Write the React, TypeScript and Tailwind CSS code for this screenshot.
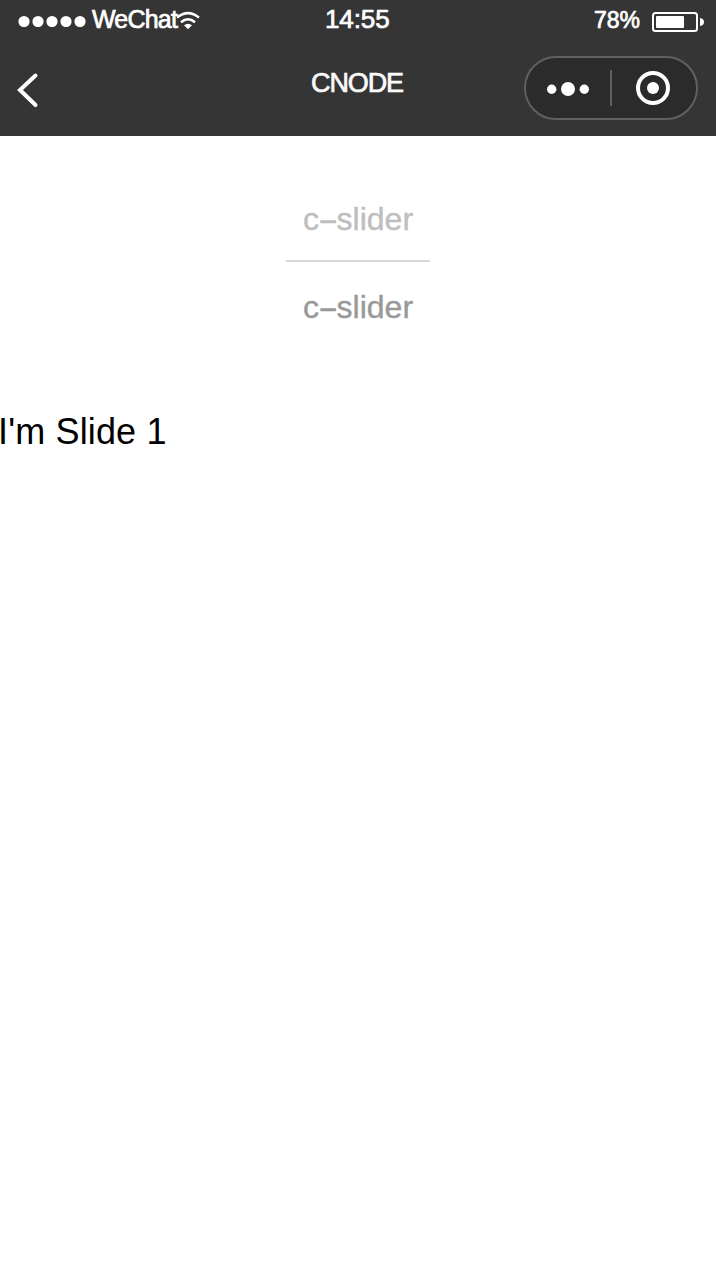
function StatusBar() {
  return (
    <div className="relative flex h-10 items-start text-white">
      <svg className="ml-[18px] mt-[15px] h-3 w-[68px] shrink-0" viewBox="0 0 68 12" fill="currentColor">
        <circle cx="6" cy="6.5" r="5.6" />
        <circle cx="20" cy="6.5" r="5.6" />
        <circle cx="34" cy="6.5" r="5.6" />
        <circle cx="48" cy="6.5" r="5.6" />
        <circle cx="62" cy="6.5" r="5.6" />
      </svg>
      <span className="ml-[6px] mt-1 w-[85px] whitespace-nowrap text-[25px] leading-[30px] tracking-[-0.8px] [-webkit-text-stroke:0.7px_white]">
        WeChat
      </span>
      <svg className="-ml-px mt-[11px] h-[19px] w-6 shrink-0" viewBox="0 0 24 19" fill="none" stroke="currentColor" strokeWidth="2.5">
        <path d="M1 6.6Q12 -2.4 23 6.6" />
        <path d="M5 11.2Q12 5.2 19 11.2" />
        <path d="M12 18.2L8 14.3Q12 11.2 16 14.3Z" fill="currentColor" stroke="none" />
      </svg>
      <span className="absolute left-[325px] top-1 text-[26px] leading-[30px] tracking-[-0.1px] [-webkit-text-stroke:0.7px_white]">14:55</span>
      <span className="ml-auto mr-3 mt-[5px] text-[23px] leading-[30px] [-webkit-text-stroke:0.7px_white]">78%</span>
      <svg className="mr-3 mt-3 h-5 w-[52px] shrink-0" viewBox="0 0 52 20" fill="none">
        <rect x="1" y="1" width="44" height="18" rx="2.5" stroke="currentColor" strokeWidth="2" />
        <rect x="4" y="4" width="28" height="12" rx="1" fill="currentColor" />
        <path d="M48 6Q52 6.5 52 10T48 14Z" fill="currentColor" />
      </svg>
    </div>
  );
}

function Capsule() {
  return (
    <div className="mr-[18px] mt-4 flex h-16 w-[174px] items-center rounded-full border-2 border-[#606060] bg-[#2b2b2b] text-white">
      <svg className="ml-5 h-4 w-11" viewBox="0 0 44 16" fill="currentColor">
        <circle cx="5.7" cy="9.2" r="4.7" />
        <circle cx="22" cy="9" r="7" />
        <circle cx="38.3" cy="9.2" r="4.7" />
      </svg>
      <div className="ml-5 h-9 w-0.5 bg-[#606060]" />
      <svg className="ml-6 h-[34px] w-[34px]" viewBox="0 0 34 34">
        <circle cx="17" cy="17" r="15" fill="none" stroke="currentColor" strokeWidth="4" />
        <circle cx="17" cy="17" r="6" fill="currentColor" />
      </svg>
    </div>
  );
}

function SliderName() {
  return (
    <>
      c<span className="inline-block w-[17.6px] origin-left -translate-x-px scale-x-[1.9]">-</span>slider
    </>
  );
}

export default function App() {
  return (
    <div className="min-h-[1276px] w-full overflow-hidden bg-white font-['Liberation_Sans',Arial,sans-serif]">
      <header className="h-[136px] bg-[#353535]">
        <StatusBar />
        <nav className="grid h-24 grid-cols-[1fr_auto_1fr] items-start">
          <svg className="ml-4 mt-8 h-9 w-6" viewBox="0 0 24 36" fill="none" stroke="white" strokeWidth="4" strokeLinecap="round">
            <path d="M19.5 3.5L4 18L19.5 33" />
          </svg>
          <h1 className="mr-0.5 mt-7 text-[27px] leading-[30px] tracking-[-1.1px] text-[#fafafa] [-webkit-text-stroke:0.7px_#fafafa]">CNODE</h1>
          <div className="flex justify-end">
            <Capsule />
          </div>
        </nav>
      </header>
      <main>
        <div className="flex flex-col items-center pt-[60px] text-[32px]">
          <div className="flex h-[66px] w-36 justify-center whitespace-nowrap border-b-2 border-[#d8d8d8] text-[#bebebe] [-webkit-text-stroke:0.4px_#bebebe]">
            <div className="pt-[3px] leading-10"><SliderName /></div>
          </div>
          <div className="pt-[25px] leading-10 text-[#999999] [-webkit-text-stroke:0.4px_#999999]"><SliderName /></div>
        </div>
        <div className="-ml-0.5 mt-[84px] text-[36px] leading-[42px] tracking-[0.15px] text-black">I'm Slide 1</div>
      </main>
    </div>
  );
}
